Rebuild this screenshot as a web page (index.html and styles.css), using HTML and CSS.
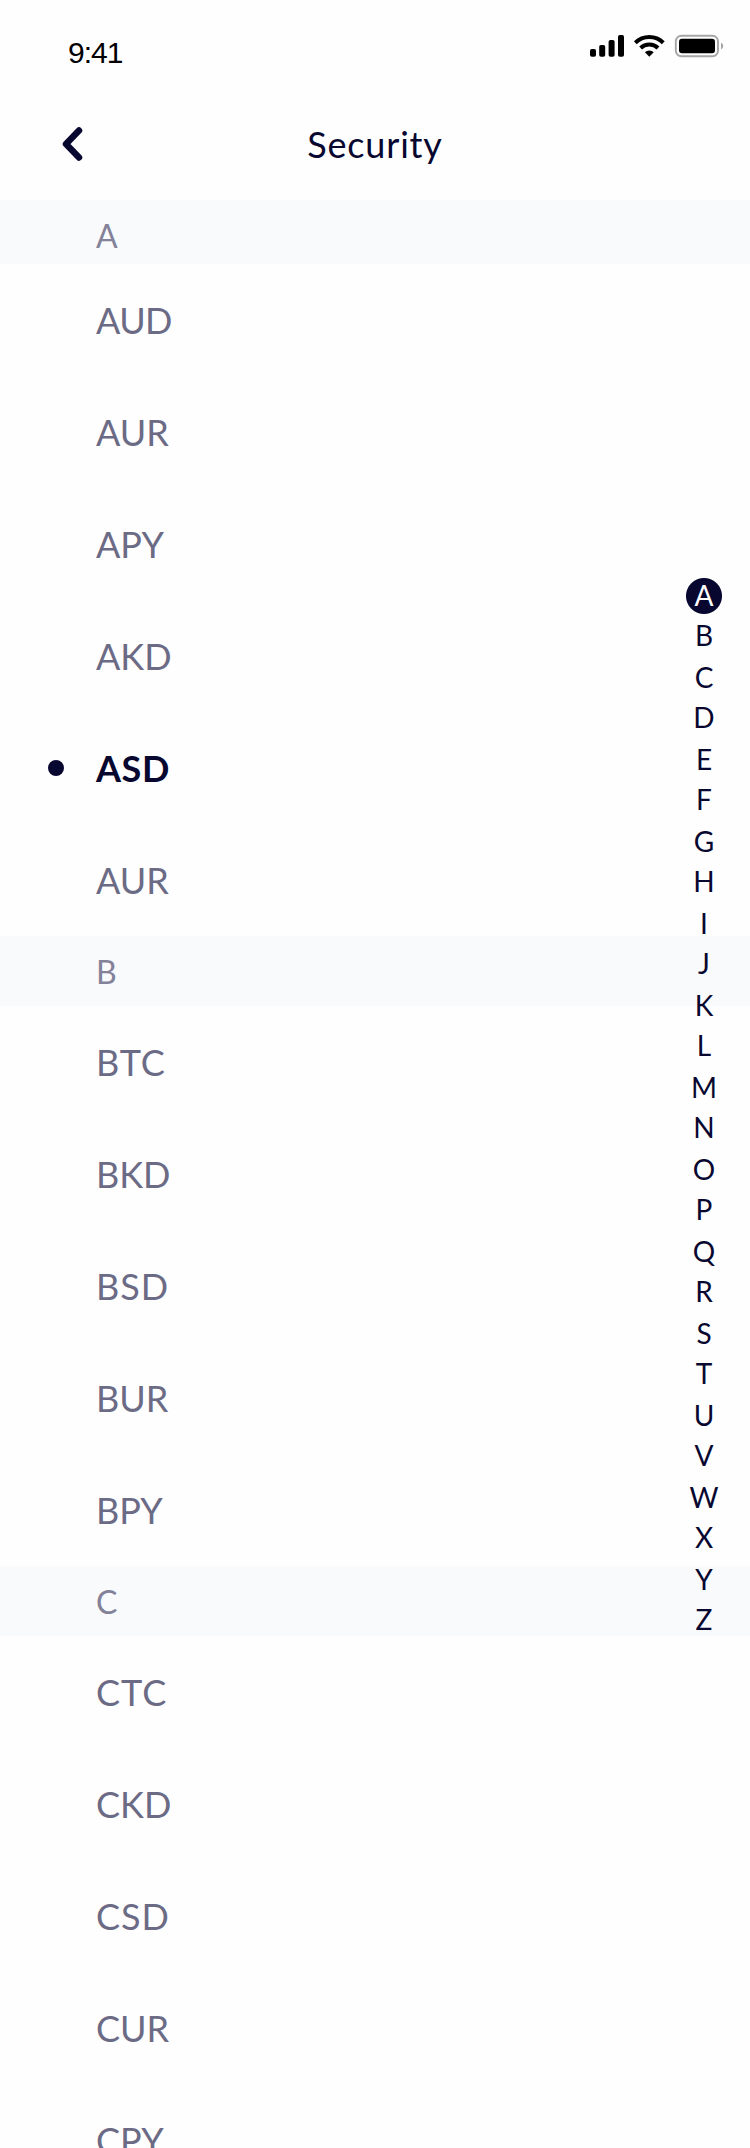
FILE: index.html
```html
<!DOCTYPE html>
<html lang="en">
<head>
<meta charset="utf-8">
<title>Security</title>
<link rel="stylesheet" href="styles.css">
</head>
<body>
<div class="screen">
  <div class="status">
    <span class="time">9:41</span>
    <svg class="status-icons" width="136" height="26" viewBox="0 0 136 26">
      <rect x="0" y="15" width="6" height="7.8" rx="1.8"/>
      <rect x="9.2" y="11" width="6" height="11.8" rx="1.8"/>
      <rect x="18.6" y="6" width="6" height="16.8" rx="1.8"/>
      <rect x="28" y="1" width="6" height="21.8" rx="1.8"/>
      <g fill="none" stroke="#000" stroke-width="4">
        <path d="M45.300 8.700A20 20 0 0 1 73.300 8.700"/>
        <path d="M50.600 14A12.600 12.600 0 0 1 68 14"/>
      </g>
      <path d="M54.900 18.300a6.400 6.400 0 0 1 8.800 0l-4.400 4.400z"/>
      <rect x="85.800" y="1.700" width="42.200" height="20.600" rx="5.500" fill="none" stroke="#a6a6a6" stroke-width="1.900"/>
      <rect x="89" y="4.700" width="36" height="14.600" rx="3"/>
      <path d="M131 8.500q2.300 1.200 2.300 3.500t-2.300 3.500z" fill="#a6a6a6"/>
    </svg>
  </div>
  <header class="header">
    <svg class="back" width="24" height="40" viewBox="0 0 24 40" fill="none" stroke="#070730" stroke-width="6.500" stroke-linecap="round" stroke-linejoin="round"><path d="M18 6.500 5 20l13 13.500"/></svg>
    <h1 class="title">Security</h1>
  </header>
  <main class="list">
    <h2 class="section section-first">A</h2>
    <div class="row tight">AUD</div>
    <div class="row">AUR</div>
    <div class="row">APY</div>
    <div class="row">AKD</div>
    <div class="row selected"><i class="dot"></i>ASD</div>
    <div class="row">AUR</div>
    <h2 class="section">B</h2>
    <div class="row wide">BTC</div>
    <div class="row">BKD</div>
    <div class="row wide">BSD</div>
    <div class="row">BUR</div>
    <div class="row">BPY</div>
    <h2 class="section">C</h2>
    <div class="row wide">CTC</div>
    <div class="row">CKD</div>
    <div class="row wide">CSD</div>
    <div class="row">CUR</div>
    <div class="row">CPY</div>
  </main>
  <nav class="index">
    <span class="key active">A</span><span class="key">B</span><span class="key">C</span><span class="key">D</span><span class="key">E</span><span class="key">F</span><span class="key">G</span><span class="key">H</span><span class="key">I</span><span class="key">J</span><span class="key">K</span><span class="key">L</span><span class="key">M</span><span class="key">N</span><span class="key">O</span><span class="key">P</span><span class="key">Q</span><span class="key">R</span><span class="key">S</span><span class="key">T</span><span class="key">U</span><span class="key">V</span><span class="key">W</span><span class="key">X</span><span class="key">Y</span><span class="key">Z</span>
  </nav>
</div>
</body>
</html>
```
FILE: styles.css
```css
* { box-sizing: border-box; margin: 0; }
body { background: #fefefe; font-family: Lato, sans-serif; color: #070730; }
.screen { position: relative; width: 750px; height: 2148px; overflow: hidden; }
.status { height: 88px; display: flex; justify-content: space-between; padding: 34px 24px 0 68px; }
.time { font: 30px/38px "Liberation Sans", Arial, sans-serif; letter-spacing: -1px; color: #000; }
.header { height: 112px; display: grid; grid-template-columns: 60px 1fr 60px; align-items: center; padding: 0 61px; }
.title { font-size: 36px; font-weight: 400; line-height: 44px; text-align: center; letter-spacing: .8px; }
.section { height: 70px; padding: 1px 96px 0; background: #f9fafc; color: #838299; font-size: 32px; font-weight: 400; line-height: 70px; }
.section-first { height: 64px; line-height: 70px; }
.row { height: 112px; padding-left: 96px; line-height: 112px; font-size: 36px; color: #6c6b85; }
.tight { letter-spacing: -.6px; }
.wide { letter-spacing: 1px; }
.selected { position: relative; color: #070730; font-weight: 700; letter-spacing: .6px; }
.dot { position: absolute; left: 48px; top: 48px; width: 16px; height: 16px; border-radius: 50%; background: #070730; }
.index { position: absolute; left: 686px; top: 578px; width: 36px; display: grid; font-size: 28px; }
.key { height: 40px; line-height: 35px; text-align: center; }
.key:nth-child(even) { height: 42px; }
.active { color: #fff; background: radial-gradient(circle at 18px 18px, #070730 17.500px, transparent 18.500px); }
```
